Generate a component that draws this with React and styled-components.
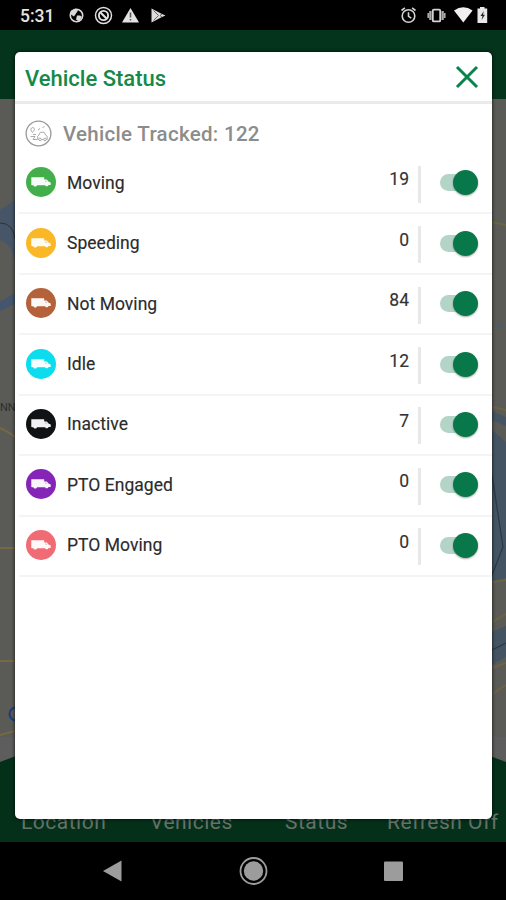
import React, { useState } from "react";
import styled, { createGlobalStyle } from "styled-components";

const GlobalStyle = createGlobalStyle`
  * {
    box-sizing: border-box;
  }
  body {
    margin: 0;
    background: #000;
    font-family: Roboto, "Liberation Sans", sans-serif;
  }
`;

const Screen = styled.div`
  position: relative;
  display: flex;
  flex-direction: column;
  width: 506px;
  height: 900px;
  overflow: hidden;
`;

const StatusBar = styled.header`
  display: flex;
  justify-content: space-between;
  height: 30px;
  padding-left: 20px;
  background: #000;
`;

const Clock = styled.span`
  width: 47px;
  font-size: 17.5px;
  line-height: 32px;
  font-weight: 500;
  color: #e4e4e4;
`;

const StatusGroup = styled.div`
  display: flex;
`;

const AppBar = styled.div`
  height: 69px;
  background: #04341c;
`;

const MapArea = styled.main`
  height: 743px;
  background: #5a5b56;
`;

const MapSvg = styled.svg`
  display: block;
`;

const TabBar = styled.nav`
  position: absolute;
  left: 0;
  top: 806px;
  width: 506px;
  height: 36px;
`;

const TabLabel = styled.span`
  position: absolute;
  left: ${(props) => props.$left}px;
  top: 4px;
  font-size: 21px;
  line-height: 24px;
  letter-spacing: 0.5px;
  white-space: nowrap;
  color: #66716a;
`;

const SystemNav = styled.footer`
  display: flex;
  height: 58px;
  background: #000;
`;

const Dialog = styled.section`
  position: absolute;
  left: 15px;
  top: 52px;
  width: 477px;
  height: 767px;
  border-radius: 5px;
  background: #fff;
  box-shadow: 0 0 3px 1px rgba(0, 0, 0, 0.5);
`;

const DialogHeader = styled.div`
  display: flex;
  align-items: center;
  justify-content: space-between;
  height: 52px;
  padding: 0 13px 0 10px;
  border-bottom: 3px solid #ebebeb;
`;

const DialogTitle = styled.h1`
  margin: 4px 0 0;
  font-size: 22px;
  line-height: 26px;
  font-weight: 500;
  color: #14894a;
`;

const CloseButton = styled.button`
  display: flex;
  padding: 0;
  border: 0;
  background: none;
`;

const Summary = styled.div`
  display: flex;
  align-items: center;
  height: 50px;
  padding: 8px 0 0 10px;
`;

const SummaryText = styled.h2`
  margin: 2px 0 0 11px;
  font-size: 20.5px;
  line-height: 24px;
  font-weight: 500;
  letter-spacing: 0.3px;
  color: #8c8c8c;
`;

const Row = styled.div`
  display: flex;
  align-items: center;
  height: 60.45px;
  margin-left: 4px;
  padding: 0 15px 0 7px;
  border-bottom: 2px solid #f4f4f4;
`;

const Badge = styled.div`
  display: flex;
  align-items: center;
  justify-content: center;
  width: 30px;
  height: 30px;
  margin-top: -2px;
  border-radius: 50%;
  background: ${(props) => props.$color};
`;

const RowLabel = styled.span`
  flex: 1;
  margin: -1px 0 0 11px;
  font-size: 17.5px;
  line-height: 22px;
  letter-spacing: 0.03px;
  color: #2b2b2b;
  -webkit-text-stroke: 0.15px #2b2b2b;
`;

const Count = styled.span`
  margin-top: -8px;
  font-size: 17.5px;
  line-height: 22px;
  color: #333;
  -webkit-text-stroke: 0.15px #333;
`;

const Divider = styled.span`
  width: 3px;
  height: 37px;
  margin: 2px 19px 0 9px;
  background: #e8e8e8;
`;

const Toggle = styled.button`
  display: flex;
  align-items: center;
  justify-content: ${(props) => (props.$on ? "flex-end" : "flex-start")};
  width: 37px;
  height: 17px;
  margin-top: -1px;
  padding: 0;
  border: 0;
  border-radius: 9px;
  background: ${(props) => (props.$on ? "#b4d4c7" : "#c4c4c4")};
`;

const Knob = styled.span`
  flex: none;
  width: 25px;
  height: 25px;
  margin-right: -1px;
  border-radius: 50%;
  background: ${(props) => (props.$on ? "#08784a" : "#f5f5f5")};
  box-shadow: 0 1px 2px rgba(0, 0, 0, 0.35);
`;

const statuses = [
  { label: "Moving", count: 19, color: "#43af4b" },
  { label: "Speeding", count: 0, color: "#fbb826" },
  { label: "Not Moving", count: 84, color: "#b5623a" },
  { label: "Idle", count: 12, color: "#0bdcee" },
  { label: "Inactive", count: 7, color: "#111214" },
  { label: "PTO Engaged", count: 0, color: "#8525b8" },
  { label: "PTO Moving", count: 0, color: "#f16b74" },
];

const TruckIcon = () => (
  <svg width="20" height="12" viewBox="0 0 20 12" fill="#fff">
    <path d="M.3 1.2h12.9v2.3h2.6l1.7 1.9 2.2 1v2.5h-2.2a1.7 1.7 0 0 1-3.3.3H6a1.7 1.7 0 0 1-3.3.2L.3 9z" opacity=".95" />
    <path d="M14.2 4.4h1.2l1 1.3h-2.2z" fill="#000" opacity=".2" />
  </svg>
);

const TrackedIcon = () => (
  <svg width="27" height="27" viewBox="0 0 27 27" fill="none" stroke="#aaa" strokeWidth="1">
    <circle cx="13.5" cy="13.5" r="12.4" stroke="#999" strokeWidth="1.3" />
    <path d="M7.5 12.5c-1.7-2-2-3-1.2-4.2 1-1.3 3-.8 3.1.8 0 1-.8 2-1.9 3.4zM8 14.5h3M5.5 16.5h4.5l-2 3h4M14 15l1.3-2.7h3.8l1.7 3 1.4 1v3.2h-9.5v-3.2zM13 10l2-1.5M17.5 7.5l2-1" />
    <circle cx="15" cy="19.4" r="1.3" fill="#fff" />
    <circle cx="20" cy="19.4" r="1.3" fill="#fff" />
  </svg>
);

const NotificationIcons = () => (
  <svg width="110" height="30" viewBox="67 0 110 30">
    <circle cx="76.5" cy="15.5" r="6.2" fill="none" stroke="#d9d9d9" strokeWidth="1.6" />
    <path d="M70.5 11l5-2.5 2.5 2-2 3-2 3-3-2zM77 15.5h3l2 1.5-3 4.5-3-2z" fill="#d9d9d9" />
    <g fill="none" stroke="#e0e0e0">
      <circle cx="103.5" cy="15.5" r="8" strokeWidth="1.5" />
      <circle cx="103.5" cy="15.5" r="4.6" strokeWidth="1.9" />
      <path d="M100 12l7 7" strokeWidth="2.2" />
    </g>
    <path d="M130.5 8l8.5 14.5h-17z" fill="#e2e2e2" />
    <path d="M130.5 12.5v5M130.5 19v1.6" stroke="#555" strokeWidth="1.5" />
    <path d="M151.5 8.5l9.5 5 4.5 2-4.5 2-9.5 5z" fill="#dcdcdc" />
    <path d="M153.5 10.5l5 5-5 5M162 14l-2 1.5 2 1.5" stroke="#666" fill="none" />
  </svg>
);

const DeviceIcons = () => (
  <svg width="111" height="30" viewBox="395 0 111 30">
    <g fill="none" stroke="#d4d4d4" strokeWidth="1.6">
      <circle cx="408.5" cy="16" r="6.3" />
      <path d="M401.5 10.5l3.4-2.7M415.5 10.5l-3.4-2.7M408.5 12.3v4l2.8 1.8" />
    </g>
    <rect x="432.8" y="9.6" width="7.4" height="11.8" rx="1" fill="none" stroke="#d4d4d4" strokeWidth="1.8" />
    <path d="M430.4 11v9M442.6 11v9" stroke="#aaa" strokeWidth="2.4" />
    <path d="M428.3 13v5M444.7 13v5" stroke="#aaa" strokeWidth="1.8" />
    <path d="M454 10.5q9.3-6.5 18.6 0L463.3 22.5z" fill="#f0f0f0" />
    <path d="M477.5 8.5h2.5V7h4.5v1.5h2.7V23h-9.7z" fill="#e8e8e8" />
    <path d="M483.8 11l-3.3 5h2l-1 4 3.5-5.2h-2z" fill="#222" />
  </svg>
);

const MapDrawing = () => (
  <MapSvg width="506" height="743" viewBox="0 99 506 743">
    <rect y="99" width="506" height="743" fill="#5a5b56" />
    <path d="M0 210l15-10v60q-5-18-15-20z" fill="#465568" />
    <path d="M0 302l15-9v11l-15 7z" fill="#43566d" />
    <path d="M0 223q13 0 15 16" fill="none" stroke="#303236" />
    <path d="M0 428q9 4 15 9M0 548h15M0 661h15M0 735l15-4" fill="none" stroke="#746943" strokeWidth="2" />
    <path d="M492 411l14 6v9l-14-6zM492 430l14 12v136l-14 4zM492 632l14-6v31l-14 8z" fill="#445462" />
    <path d="M492 222l14 3M492 407l14 3M492 582l14-2M492 622l14-8M492 668l14-5M492 694l14-9" fill="none" stroke="#6b6342" strokeWidth="2" />
    <path d="M492 475l11 72-11 28M492 650l14-7" fill="none" stroke="#2e3943" strokeWidth="1.3" />
    <circle cx="500" cy="325" r="2.5" fill="#4c5c6c" />
    <circle cx="16" cy="714" r="6.5" fill="none" stroke="#173e7d" strokeWidth="2" />
    <text x="0" y="411" fontSize="11" fill="#2d2e2e">NN</text>
    <path d="M0 737h506v24H0z" fill="#5d5d5d" />
    <path d="M0 762Q253 660 506 762V842H0z" fill="#04301a" />
  </MapSvg>
);

const StatusRow = ({ label, count, color }) => {
  const [on, setOn] = useState(true);
  return (
    <Row>
      <Badge $color={color}>
        <TruckIcon />
      </Badge>
      <RowLabel>{label}</RowLabel>
      <Count>{count}</Count>
      <Divider />
      <Toggle $on={on} onClick={() => setOn(!on)} aria-label={label}>
        <Knob $on={on} />
      </Toggle>
    </Row>
  );
};

const App = () => {
  return (
    <Screen>
      <GlobalStyle />
      <StatusBar>
        <StatusGroup>
          <Clock>5:31</Clock>
          <NotificationIcons />
        </StatusGroup>
        <DeviceIcons />
      </StatusBar>
      <AppBar />
      <MapArea>
        <MapDrawing />
      </MapArea>
      <SystemNav>
        <svg width="506" height="58" viewBox="0 0 506 58" fill="#9c9c9c">
          <path d="M103 29l18.5-10.5v21z" />
          <circle cx="253.5" cy="29" r="13" fill="none" stroke="#9c9c9c" strokeWidth="1.8" />
          <circle cx="253.5" cy="29" r="9.7" />
          <rect x="384" y="19.5" width="19" height="19.5" rx="1" />
        </svg>
      </SystemNav>
      <TabBar>
        <TabLabel $left={21}>Location</TabLabel>
        <TabLabel $left={150}>Vehicles</TabLabel>
        <TabLabel $left={285}>Status</TabLabel>
        <TabLabel $left={387}>Refresh Off</TabLabel>
      </TabBar>
      <Dialog>
        <DialogHeader>
          <DialogTitle>Vehicle Status</DialogTitle>
          <CloseButton aria-label="Close">
            <svg width="24" height="24" viewBox="0 0 24 24">
              <path d="M2 2l20 20M22 2L2 22" stroke="#07834b" strokeWidth="3" />
            </svg>
          </CloseButton>
        </DialogHeader>
        <Summary>
          <TrackedIcon />
          <SummaryText>Vehicle Tracked: 122</SummaryText>
        </Summary>
        {statuses.map((status) => (
          <StatusRow key={status.label} {...status} />
        ))}
      </Dialog>
    </Screen>
  );
};

export default App;
